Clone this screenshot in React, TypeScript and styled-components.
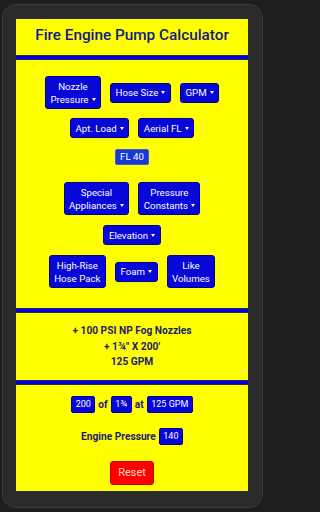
import React from "react";
import styled, { createGlobalStyle } from "styled-components";

const GlobalStyle = createGlobalStyle`
  html, body {
    margin: 0;
    padding: 0;
    background: #1e1e1e;
  }
  body {
    font-family: Roboto, "Liberation Sans", Arial, sans-serif;
  }
`;

const Phone = styled.div`
  box-sizing: border-box;
  width: 261px;
  height: 504px;
  margin: 4px 2px 0 2px;
  padding: 14px 14px 16px 13px;
  background: #2a2a2a;
  border: 1px solid #3c3c3c;
  border-radius: 14px;
`;

const Screen = styled.div`
  height: 100%;
  background: #ffff00;
  display: flex;
  flex-direction: column;
`;

const Header = styled.h1`
  margin: 0;
  box-sizing: border-box;
  height: 36px;
  padding-bottom: 4px;
  flex-shrink: 0;
  display: flex;
  align-items: center;
  justify-content: center;
  font-size: 15.3px;
  font-weight: 500;
  color: #101a8c;
`;

const Divider = styled.div`
  height: 3px;
  flex-shrink: 0;
  background: #0000ee;
  border-top: 1px solid #2a2a55;
  border-bottom: 1px solid #2a2a55;
`;

const Controls = styled.div`
  padding: 16px 0 20px;
  display: flex;
  flex-direction: column;
  align-items: center;
`;

const Row = styled.div<{ $space?: number }>`
  display: flex;
  justify-content: center;
  align-items: center;
  gap: 9px;
  margin-top: ${(p) => p.$space ?? 0}px;
`;

const Button = styled.button`
  font-family: inherit;
  font-size: 9.7px;
  line-height: 13px;
  color: #ffffff;
  background: #0707d8;
  border: 1px solid #00009a;
  border-radius: 3px;
  padding: 2.5px 4.5px;
  text-align: center;
`;

const Caret = styled.span`
  display: inline-block;
  margin-left: 3px;
  vertical-align: 2px;
  border-top: 3px solid #ffffff;
  border-left: 2.5px solid transparent;
  border-right: 2.5px solid transparent;
`;

const Badge = styled.span`
  font-size: 9.7px;
  line-height: 12px;
  color: #ffffff;
  background: #1838d8;
  border: 1px solid #3a5ae8;
  border-radius: 2px;
  padding: 1px 4px;
`;

const Summary = styled.div`
  padding: 10px 0;
  text-align: center;
  font-size: 10.2px;
  line-height: 15.5px;
  font-weight: 700;
  color: #1c1c72;
`;

const Result = styled.div`
  padding: 11px 0 6px;
  display: flex;
  flex-direction: column;
  align-items: center;
`;

const Line = styled.div<{ $space?: number }>`
  display: flex;
  align-items: center;
  justify-content: center;
  gap: 3px;
  margin-top: ${(p) => p.$space ?? 0}px;
  font-size: 10.2px;
  font-weight: 700;
  color: #1c1c72;
`;

const Value = styled.span`
  font-size: 9px;
  font-weight: 400;
  line-height: 12px;
  color: #ffffff;
  background: #0707d8;
  border: 1px solid #00009a;
  border-radius: 2px;
  padding: 1.5px 3.5px;
`;

const Reset = styled.button`
  margin-top: 16px;
  font-family: inherit;
  font-size: 11px;
  line-height: 14px;
  color: #ffdcc0;
  background: #ff0000;
  border: 1px solid #c40000;
  border-radius: 3px;
  padding: 4px 7px;
`;

const Drop = ({ children }: { children: React.ReactNode }) => (
  <Button>
    {children}
    <Caret />
  </Button>
);

export default function App() {
  return (
    <>
      <GlobalStyle />
      <Phone>
        <Screen>
          <Header>Fire Engine Pump Calculator</Header>
          <Divider />
          <Controls>
            <Row>
              <Drop>
                Nozzle
                <br />
                Pressure
              </Drop>
              <Drop>Hose Size</Drop>
              <Drop>GPM</Drop>
            </Row>
            <Row $space={9}>
              <Drop>Apt. Load</Drop>
              <Drop>Aerial FL</Drop>
            </Row>
            <Row $space={11}>
              <Badge>FL 40</Badge>
            </Row>
            <Row $space={17}>
              <Drop>
                Special
                <br />
                Appliances
              </Drop>
              <Drop>
                Pressure
                <br />
                Constants
              </Drop>
            </Row>
            <Row $space={10}>
              <Drop>Elevation</Drop>
            </Row>
            <Row $space={10}>
              <Button>
                High-Rise
                <br />
                Hose Pack
              </Button>
              <Drop>Foam</Drop>
              <Button>
                Like
                <br />
                Volumes
              </Button>
            </Row>
          </Controls>
          <Divider />
          <Summary>
            <div>+ 100 PSI NP Fog Nozzles</div>
            <div>+ 1¾" X 200'</div>
            <div>125 GPM</div>
          </Summary>
          <Divider />
          <Result>
            <Line>
              <Value>200</Value>
              <span>of</span>
              <Value>1¾</Value>
              <span>at</span>
              <Value>125 GPM</Value>
            </Line>
            <Line $space={15}>
              <span>Engine Pressure</span>
              <Value>140</Value>
            </Line>
            <Reset>Reset</Reset>
          </Result>
        </Screen>
      </Phone>
    </>
  );
}
